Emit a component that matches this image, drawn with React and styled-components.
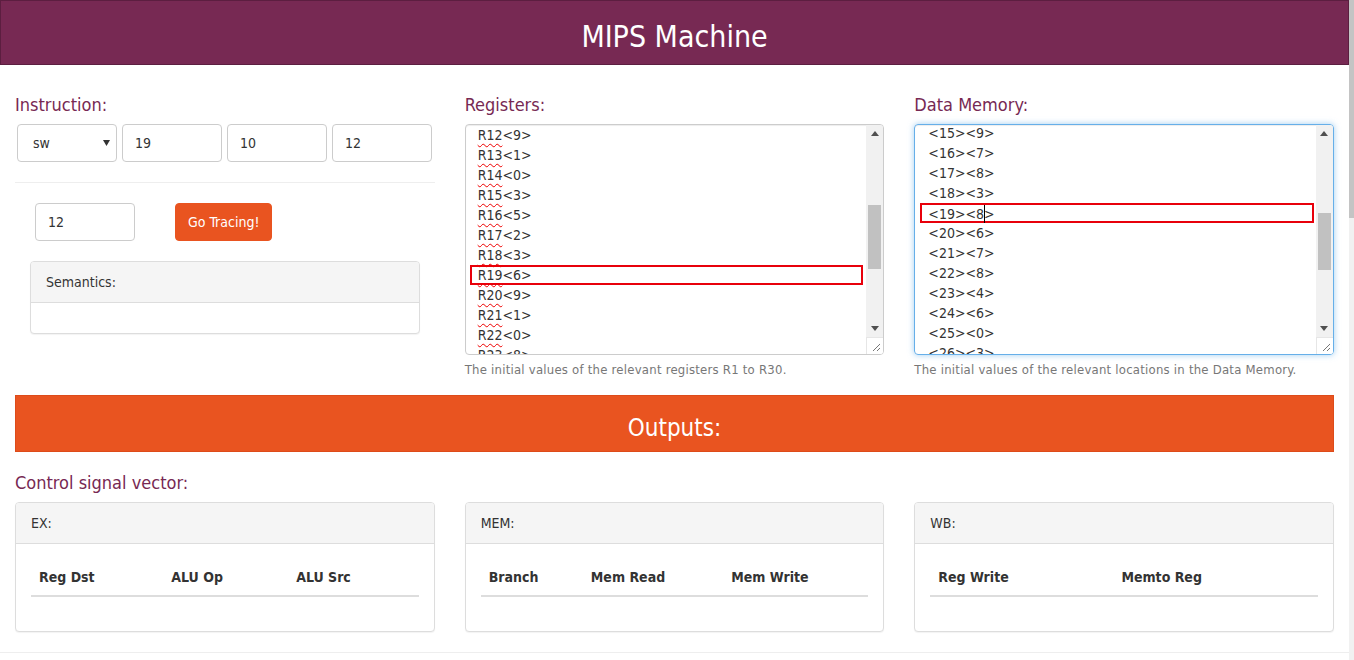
import styled, { createGlobalStyle } from 'styled-components';

const GlobalStyle = createGlobalStyle`
  html, body {
    margin: 0;
    height: 100%;
    overflow: hidden;
  }
  body {
    font-family: "DejaVu Sans Condensed", "DejaVu Sans", sans-serif;
    font-size: 14px;
    color: #333;
    background: #fff;
  }
  * {
    box-sizing: border-box;
  }
`;

const registers = [
  ['R12', '9'],
  ['R13', '1'],
  ['R14', '0'],
  ['R15', '3'],
  ['R16', '5'],
  ['R17', '2'],
  ['R18', '3'],
  ['R19', '6'],
  ['R20', '9'],
  ['R21', '1'],
  ['R22', '0'],
  ['R23', '8'],
];

const memory = [
  ['15', '9'],
  ['16', '7'],
  ['17', '8'],
  ['18', '3'],
  ['19', '8'],
  ['20', '6'],
  ['21', '7'],
  ['22', '8'],
  ['23', '4'],
  ['24', '6'],
  ['25', '0'],
  ['26', '3'],
];

const signals = [
  { title: 'EX:', cols: ['Reg Dst', 'ALU Op', 'ALU Src'] },
  { title: 'MEM:', cols: ['Branch', 'Mem Read', 'Mem Write'] },
  { title: 'WB:', cols: ['Reg Write', 'Memto Reg'] },
];

function Scroller({ thumbTop, thumbHeight }) {
  return (
    <ScrollCol>
      <ScrollBtn>
        <svg width="8" height="5" viewBox="0 0 8 5">
          <path d="M0 5 L4 0 L8 5 Z" fill="#505050" />
        </svg>
      </ScrollBtn>
      <Track>
        <Thumb style={{ marginTop: thumbTop, height: thumbHeight }} />
      </Track>
      <ScrollBtn>
        <svg width="8" height="5" viewBox="0 0 8 5">
          <path d="M0 0 L8 0 L4 5 Z" fill="#505050" />
        </svg>
      </ScrollBtn>
      <Corner>
        <svg width="9" height="9" viewBox="0 0 9 9">
          <path d="M1 8 L8 1 M5 8 L8 5" stroke="#777" strokeWidth="1" />
        </svg>
      </Corner>
    </ScrollCol>
  );
}

function App() {
  return (
    <Shell>
      <GlobalStyle />
      <Page>
        <Header>
          <Title>MIPS Machine</Title>
        </Header>
        <Main>
          <TopGrid>
            <Column>
              <Label>Instruction:</Label>
              <InstrRow>
                <SelectShell>
                  <NativeSelect defaultValue="sw">
                    <option value="add">add</option>
                    <option value="lw">lw</option>
                    <option value="sw">sw</option>
                    <option value="beq">beq</option>
                  </NativeSelect>
                  <svg width="7" height="6" viewBox="0 0 7 6">
                    <path d="M0 0 L7 0 L3.5 6 Z" fill="#333" />
                  </svg>
                </SelectShell>
                <Field defaultValue="19" />
                <Field defaultValue="10" />
                <Field defaultValue="12" />
              </InstrRow>
              <Rule />
              <TraceRow>
                <Field defaultValue="12" />
                <GoButton>Go Tracing!</GoButton>
              </TraceRow>
              <Panel $inset>
                <PanelHead>Semantics:</PanelHead>
                <PanelBody />
              </Panel>
            </Column>

            <Column>
              <Label>Registers:</Label>
              <ListBox>
                <Lines $left={4}>
                  {registers.map(([r, v]) => (
                    <Line key={r} $marked={r === 'R19'}>
                      <Spell>{r}</Spell>&lt;{v}&gt;
                    </Line>
                  ))}
                </Lines>
                <Scroller thumbTop={63} thumbHeight={64} />
              </ListBox>
              <Help>The initial values of the relevant registers R1 to R30.</Help>
            </Column>

            <Column>
              <Label>Data Memory:</Label>
              <ListBox $focused>
                <Lines $left={5} $shift={-2}>
                  {memory.map(([a, v]) => (
                    <Line key={a} $marked={a === '19'}>
                      &lt;{a}&gt;&lt;{v}
                      {a === '19' && <Caret />}
                      &gt;
                    </Line>
                  ))}
                </Lines>
                <Scroller thumbTop={71} thumbHeight={57} />
              </ListBox>
              <Help>The initial values of the relevant locations in the Data Memory.</Help>
            </Column>
          </TopGrid>

          <OutputsBar>
            <OutputsTitle>Outputs:</OutputsTitle>
          </OutputsBar>

          <Label $spaced>Control signal vector:</Label>
          <SignalGrid>
            {signals.map((s) => (
              <Panel key={s.title}>
                <PanelHead>{s.title}</PanelHead>
                <PanelBody>
                  <SignalTable>
                    <thead>
                      <tr>
                        {s.cols.map((c) => (
                          <th key={c}>{c}</th>
                        ))}
                      </tr>
                    </thead>
                    <tbody />
                  </SignalTable>
                </PanelBody>
              </Panel>
            ))}
          </SignalGrid>
        </Main>
        <Footer />
      </Page>
      <PageRail>
        <PageThumb />
      </PageRail>
    </Shell>
  );
}
export default App;

const Shell = styled.div`
  display: flex;
  height: 100vh;
  width: 100%;
`;

const Page = styled.div`
  flex: 1;
  min-width: 0;
`;

const PageRail = styled.div`
  width: 5px;
  flex: 0 0 5px;
  background: #f1f1f1;
`;

const PageThumb = styled.div`
  height: 218px;
  background: #c4c4c4;
`;

const Header = styled.header`
  display: flex;
  justify-content: center;
  align-items: center;
  height: 65px;
  padding-top: 9px;
  background: #772953;
  border: 1px solid #5c1e40;
`;

const Title = styled.h1`
  margin: 0;
  color: #fff;
  font-size: 30px;
  font-weight: 400;
  line-height: 1;
`;

const Main = styled.main`
  padding: 30px 15px 0;
`;

const TopGrid = styled.div`
  display: grid;
  grid-template-columns: repeat(3, 1fr);
  column-gap: 30px;
`;

const Column = styled.div`
  display: flex;
  flex-direction: column;
  min-width: 0;
`;

const Label = styled.h4`
  margin: ${({ $spaced }) => ($spaced ? '21px 0 9px' : '0 0 9px')};
  color: #772953;
  font-size: 18px;
  font-weight: 400;
  line-height: 20px;
`;

const InstrRow = styled.div`
  display: flex;
  gap: 5px;
  padding-left: 2px;
`;

const SelectShell = styled.div`
  display: flex;
  align-items: center;
  width: 100px;
  height: 38px;
  padding-right: 6px;
  border: 1px solid #ccc;
  border-radius: 4px;
  background: #fff;
`;

const NativeSelect = styled.select`
  flex: 1;
  min-width: 0;
  height: 100%;
  padding: 0 0 0 15px;
  border: none;
  background: transparent;
  appearance: none;
  font: inherit;
  color: #333;
  outline: none;
`;

const Field = styled.input`
  width: 100px;
  height: 38px;
  padding: 6px 12px;
  border: 1px solid #ccc;
  border-radius: 4px;
  font: inherit;
  color: #333;
  outline: none;
`;

const Rule = styled.hr`
  width: 100%;
  margin: 20px 0;
  border: 0;
  border-top: 1px solid #eee;
`;

const TraceRow = styled.div`
  display: flex;
  gap: 40px;
  padding-left: 20px;
`;

const GoButton = styled.button`
  height: 38px;
  padding: 6px 12px;
  border: 1px solid #e95420;
  border-radius: 4px;
  background: #e95420;
  color: #fff;
  font: inherit;
  cursor: pointer;
`;

const Panel = styled.div`
  margin: ${({ $inset }) => ($inset ? '20px 15px 0' : '0')};
  border: 1px solid #ddd;
  border-radius: 4px;
  background: #fff;
  box-shadow: 0 1px 1px rgba(0, 0, 0, 0.05);
  overflow: hidden;
`;

const PanelHead = styled.div`
  padding: 10px 15px;
  line-height: 20px;
  background: #f5f5f5;
  border-bottom: 1px solid #ddd;
  color: #333;
`;

const PanelBody = styled.div`
  padding: 15px;
`;

const ListBox = styled.div`
  display: flex;
  height: 231px;
  border: 1px solid ${({ $focused }) => ($focused ? '#66afe9' : '#ccc')};
  border-radius: 4px;
  box-shadow: ${({ $focused }) =>
    $focused
      ? 'inset 0 1px 1px rgba(0,0,0,.075), 0 0 6px rgba(102,175,233,.6)'
      : 'inset 0 1px 1px rgba(0,0,0,.075)'};
  overflow: hidden;
`;

const Lines = styled.div`
  flex: 1;
  min-width: 0;
  overflow: hidden;
  padding: 0 ${({ $left }) => 7 - $left}px 0 ${({ $left }) => $left}px;
  margin-top: ${({ $shift }) => $shift || 0}px;
`;

const Line = styled.div`
  height: 20px;
  line-height: 16px;
  padding-left: 6px;
  border: 2px solid ${({ $marked }) => ($marked ? '#e8000b' : 'transparent')};
  white-space: nowrap;
  color: #333;
`;

const Spell = styled.span`
  text-decoration: underline wavy #e00;
  text-decoration-thickness: 1px;
  text-underline-offset: 3px;
`;

const Caret = styled.span`
  display: inline-block;
  width: 1px;
  height: 18px;
  margin-right: -1px;
  vertical-align: -4px;
  background: #000;
`;

const ScrollCol = styled.div`
  display: flex;
  flex-direction: column;
  width: 17px;
  flex: 0 0 17px;
  background: #f1f1f1;
`;

const ScrollBtn = styled.div`
  display: flex;
  align-items: center;
  justify-content: center;
  height: 17px;
`;

const Track = styled.div`
  flex: 1;
  padding: 0 2px;
`;

const Thumb = styled.div`
  background: #c1c1c1;
`;

const Corner = styled.div`
  display: flex;
  align-items: flex-end;
  justify-content: flex-end;
  height: 17px;
  padding: 0 2px 2px 0;
  background: #fff;
  border-top: 1px solid #e6e6e6;
  border-left: 1px solid #e6e6e6;
`;

const Help = styled.p`
  margin: 5px 0 0;
  line-height: 20px;
  font-size: 13px;
  letter-spacing: 0.23px;
  color: #777;
`;

const OutputsBar = styled.div`
  margin-top: 15px;
  padding: 19px 0 10px;
  background: #e95420;
  border: 1px solid #dd4b1a;
  text-align: center;
`;

const OutputsTitle = styled.h3`
  margin: 0;
  color: #fff;
  font-size: 24px;
  font-weight: 400;
  line-height: 26px;
`;

const SignalGrid = styled.div`
  display: grid;
  grid-template-columns: repeat(3, 1fr);
  column-gap: 30px;
`;

const SignalTable = styled.table`
  width: 100%;
  margin-bottom: 19px;
  border-collapse: collapse;

  th {
    padding: 8px;
    text-align: left;
    font-weight: 700;
    line-height: 20px;
    color: #333;
    border-bottom: 2px solid #ddd;
  }
`;

const Footer = styled.footer`
  margin-top: 20px;
  border-top: 1px solid #eee;
`;
